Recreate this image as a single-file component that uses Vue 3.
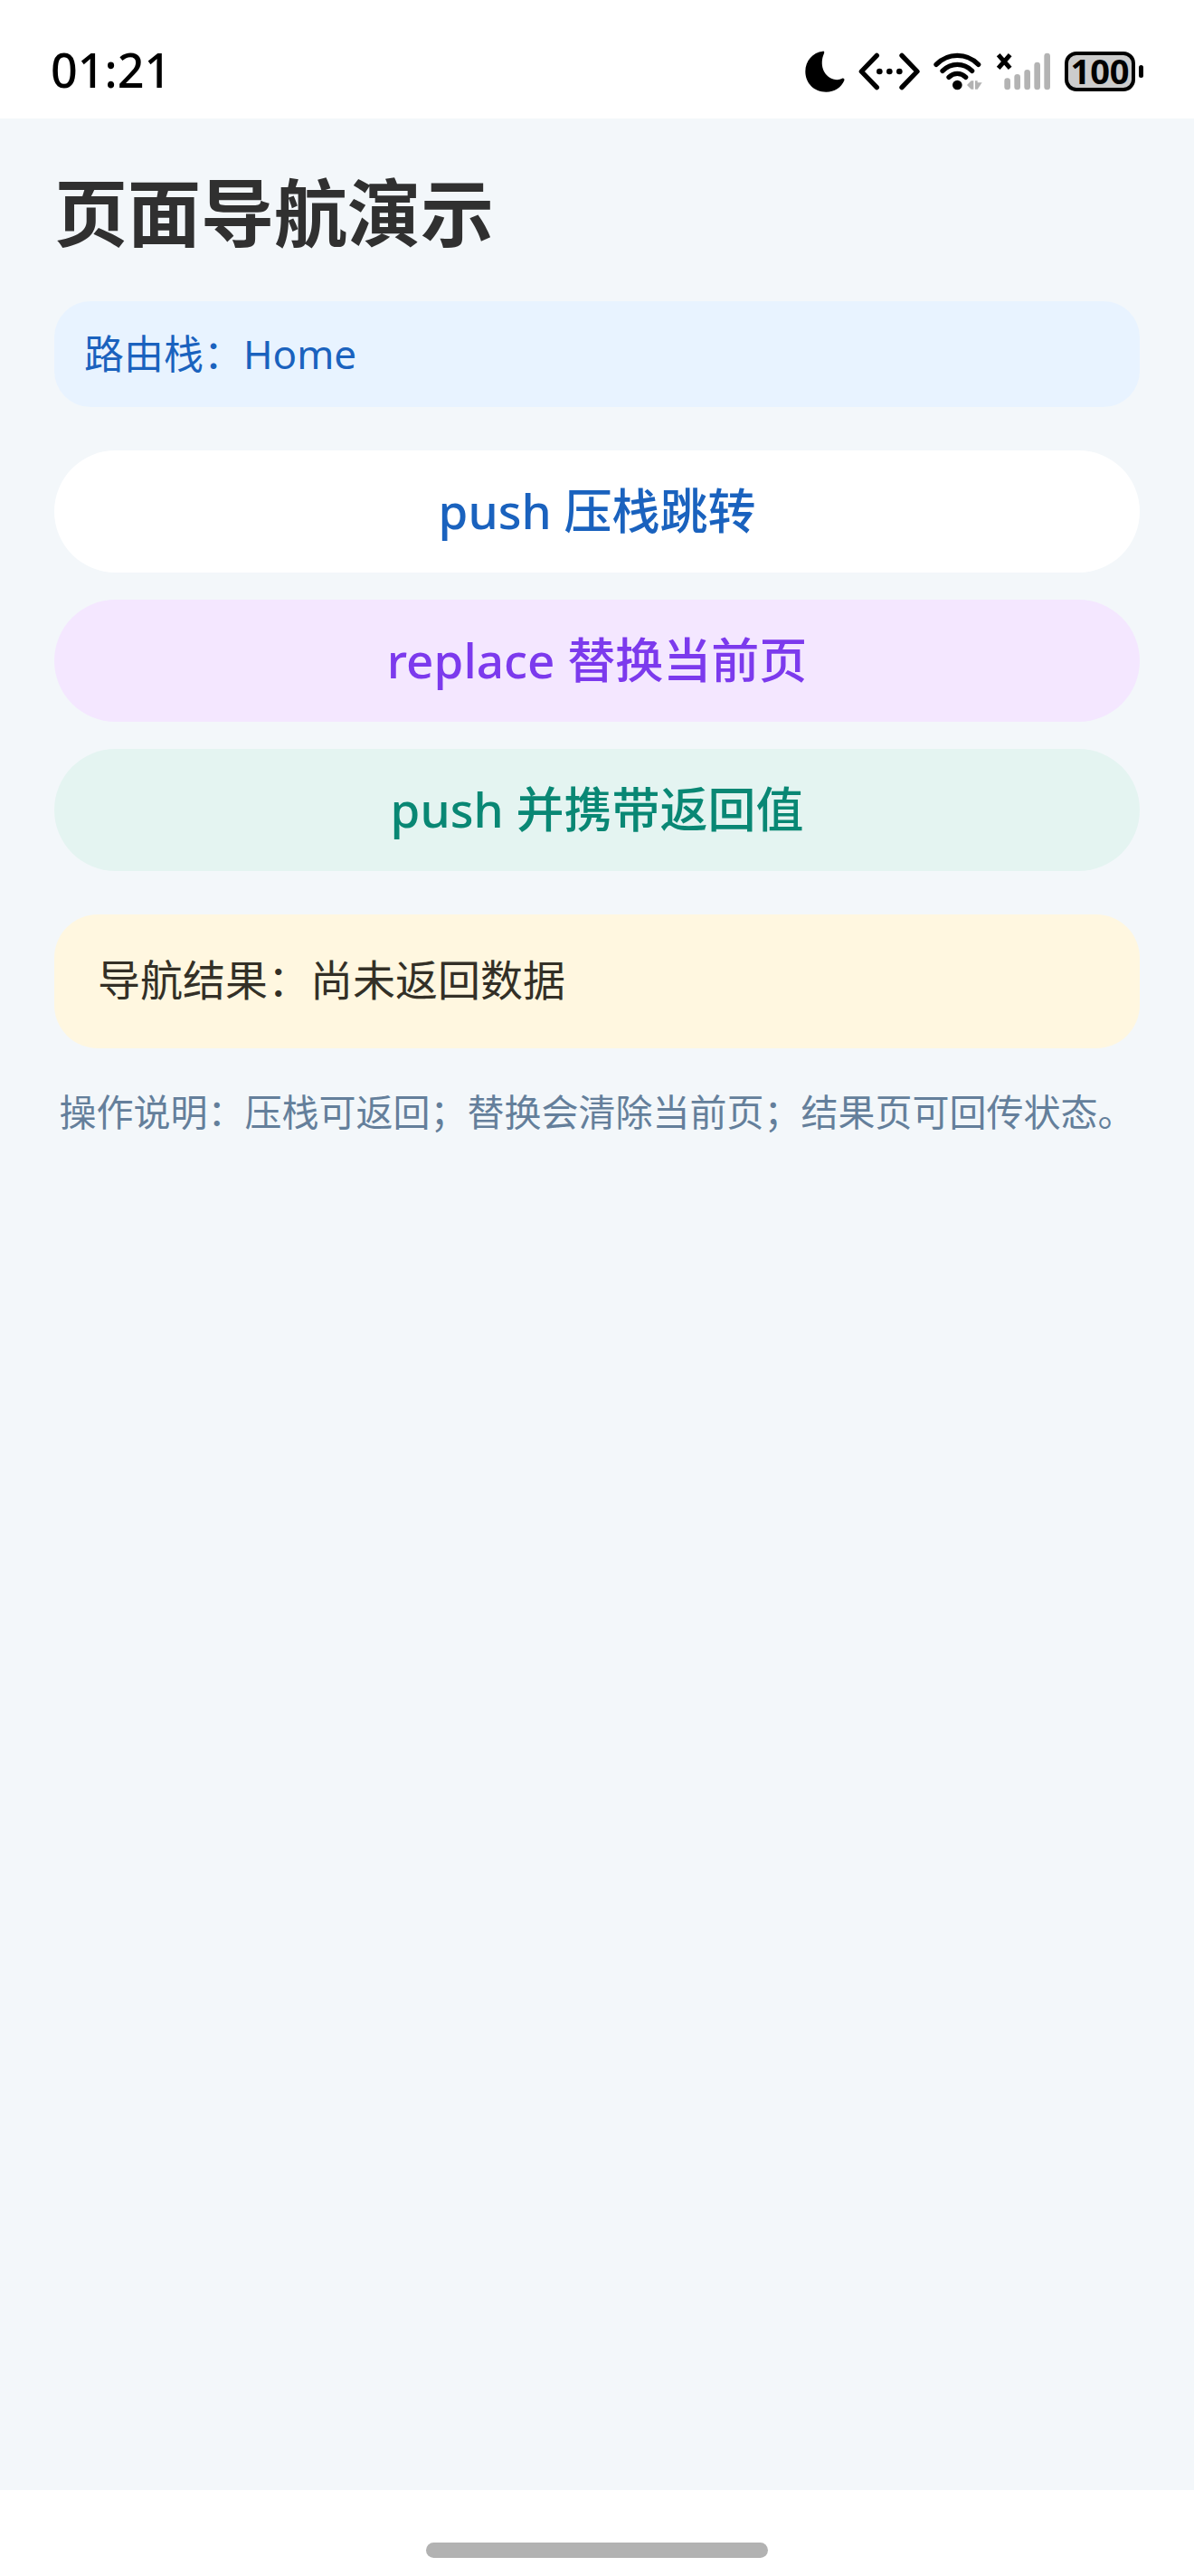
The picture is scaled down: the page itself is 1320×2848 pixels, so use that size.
<script setup>
import { ref } from 'vue'

const time = ref('01:21')
const battery = ref(100)
const stack = ref(['Home'])
const result = ref('尚未返回数据')

const actions = [
  { kind: 'push', label: 'push 压栈跳转' },
  { kind: 'replace', label: 'replace 替换当前页' },
  { kind: 'result', label: 'push 并携带返回值' },
]
</script>

<template>
  <div class="screen">
    <header class="status">
      <time class="clock">{{ time }}</time>
      <div class="indicators">
        <svg width="44" height="46" viewBox="62 79 132 138" aria-hidden="true">
          <path d="M121 81C125 80 127 84 125 88C110 122 120 164 158 174C168 177 178 175 185 171C190 169 194 173 192 178C182 202 160 216 132 216C92 216 63 187 63 148C63 112 88 85 121 81Z" />
        </svg>
        <svg width="68" height="42" viewBox="240 84 204 126" aria-hidden="true">
          <g fill="none" stroke="#000" stroke-width="16" stroke-linecap="round" stroke-linejoin="round">
            <path d="M301 94L250 147L301 200M384 94L435 147L384 200" />
          </g>
          <circle cx="310" cy="147" r="10" />
          <circle cx="343" cy="147" r="10" />
          <circle cx="376" cy="147" r="10" />
        </svg>
        <svg width="54" height="42" viewBox="491 84 162 126" aria-hidden="true">
          <g fill="none" stroke="#000" stroke-width="16" stroke-linecap="round">
            <path d="M500 124C539 84 601 84 640 124M521 145C549 117 591 117 619 145M542 166C558 150 582 150 598 166" />
          </g>
          <circle cx="570" cy="192" r="16" />
          <path fill="#b3b3b3" d="M602 192L616 178H624V206H616ZM629 178H637V184H652L637 206H629Z" />
        </svg>
        <svg width="61" height="42" viewBox="63 84 183 126" aria-hidden="true">
          <path d="M71 92L110 136M110 92L71 136" fill="none" stroke="#000" stroke-width="15" />
          <path d="M101 179V198M134 166V198M167 151V198M200 126V198M233 96V198" fill="none" stroke="#b3b3b3" stroke-width="20" stroke-linecap="round" />
        </svg>
        <div class="battery">
          <span class="level">{{ battery }}</span>
          <span class="tip"></span>
        </div>
      </div>
    </header>

    <main class="page">
      <h1 class="title">页面导航演示</h1>
      <p class="route">路由栈：{{ stack.join(' / ') }}</p>
      <div class="actions">
        <button v-for="a in actions" :key="a.kind" type="button" class="action" :class="a.kind">
          {{ a.label }}
        </button>
      </div>
      <p class="result-card">导航结果：{{ result }}</p>
      <p class="hint">操作说明：压栈可返回；替换会清除当前页；结果页可回传状态。</p>
    </main>

    <footer class="gesture"><span class="handle"></span></footer>
  </div>
</template>

<style>
body {
  margin: 0;
}
</style>

<style scoped>
.screen {
  display: flex;
  flex-direction: column;
  min-height: 100vh;
  background: #f3f7fa;
  font-family: "Noto Sans", "Noto Sans CJK SC", sans-serif;
}

.status {
  display: flex;
  align-items: center;
  justify-content: space-between;
  box-sizing: border-box;
  height: 131px;
  padding: 27px 56px 0;
  background: #fff;
  color: #000;
}

.clock {
  padding-bottom: 4px;
  font-size: 52px;
  line-height: 60px;
  font-weight: 500;
}

.indicators {
  display: flex;
  align-items: center;
  gap: 15px;
}

.indicators svg {
  display: block;
}

.battery {
  display: flex;
  align-items: center;
  gap: 4px;
}

.level {
  box-sizing: border-box;
  width: 78px;
  height: 44px;
  border: 4px solid #000;
  border-radius: 13px;
  background: #ccc;
  font-size: 38px;
  line-height: 34px;
  font-weight: 700;
  text-align: center;
}

.tip {
  width: 5px;
  height: 14px;
  border-radius: 3px;
  background: #000;
}

.page {
  flex: 1;
  padding: 56px 60px;
}

.title {
  margin: 0 0 50px;
  color: #303030;
  font-size: 81px;
  line-height: 96px;
  font-weight: 700;
}

.route {
  margin: 0 0 48px;
  padding: 28px 33px;
  border-radius: 40px;
  background: #e8f3ff;
  color: #1a62be;
  font-size: 44px;
  line-height: 61px;
}

.actions {
  display: flex;
  flex-direction: column;
  gap: 30px;
}

.action {
  height: 135px;
  padding: 0 0 6px;
  border: 0;
  border-radius: 68px;
  font-family: inherit;
  font-size: 53px;
  font-weight: 500;
  text-align: center;
  cursor: pointer;
}

.push {
  background: #fff;
  color: #1a62be;
}

.replace {
  background: #f4e7ff;
  color: #7c3aed;
}

.result {
  background: #e4f4f1;
  color: #098774;
}

.result-card {
  margin: 48px 0 40px;
  padding: 42px 48px 45px;
  border-radius: 48px;
  background: #fff7e0;
  color: #333027;
  font-size: 47px;
  line-height: 61px;
}

.hint {
  margin: 0;
  color: #647f9b;
  font-size: 41px;
  line-height: 61px;
  text-align: center;
}

.gesture {
  display: flex;
  justify-content: center;
  align-items: flex-end;
  box-sizing: border-box;
  height: 95px;
  padding-bottom: 20px;
  background: #fff;
}

.handle {
  width: 378px;
  height: 17px;
  border-radius: 9px;
  background: #b2b2b2;
}
</style>
